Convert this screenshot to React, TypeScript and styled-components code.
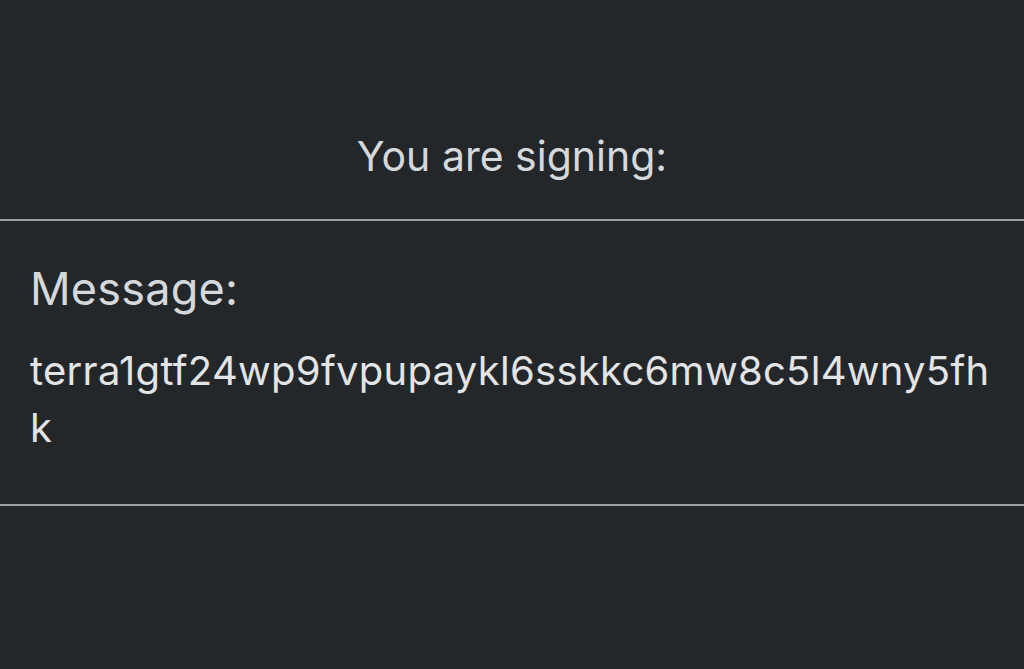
import React from "react";
import styled, { createGlobalStyle } from "styled-components";

const GlobalStyle = createGlobalStyle`
  html, body {
    margin: 0;
    padding: 0;
    background: #24272a;
  }
  body {
    font-family: Inter, "Noto Sans", sans-serif;
    color: #d6d9dc;
  }
`;

const Page = styled.div`
  width: 1024px;
  height: 669px;
  background: #24272a;
  display: flex;
  flex-direction: column;
`;

const Header = styled.div`
  height: 221px;
  box-sizing: border-box;
  border-bottom: 2px solid #9aa1a9;
  display: flex;
  align-items: flex-end;
  justify-content: center;
  padding-bottom: 38px;
`;

const Title = styled.h1`
  margin: 0;
  font-size: 41px;
  font-weight: 400;
  line-height: 50px;
  color: #d6d9dc;
`;

const Section = styled.section`
  padding: 41px 30px 48px;
  border-bottom: 2px solid #9aa1a9;
  display: flex;
  flex-direction: column;
  gap: 26px;
`;

const Label = styled.div`
  font-size: 45px;
  line-height: 54px;
  letter-spacing: 0.2px;
  color: #d6d9dc;
`;

const MessageText = styled.div`
  font-size: 40px;
  line-height: 57px;
  letter-spacing: 0.28px;
  color: #e2e4e6;
  word-break: break-all;
`;

export default function App() {
  return (
    <Page>
      <GlobalStyle />
      <Header>
        <Title>You are signing:</Title>
      </Header>
      <Section>
        <Label>Message:</Label>
        <MessageText>terra1gtf24wp9fvpupaykl6sskkc6mw8c5l4wny5fhk</MessageText>
      </Section>
    </Page>
  );
}
